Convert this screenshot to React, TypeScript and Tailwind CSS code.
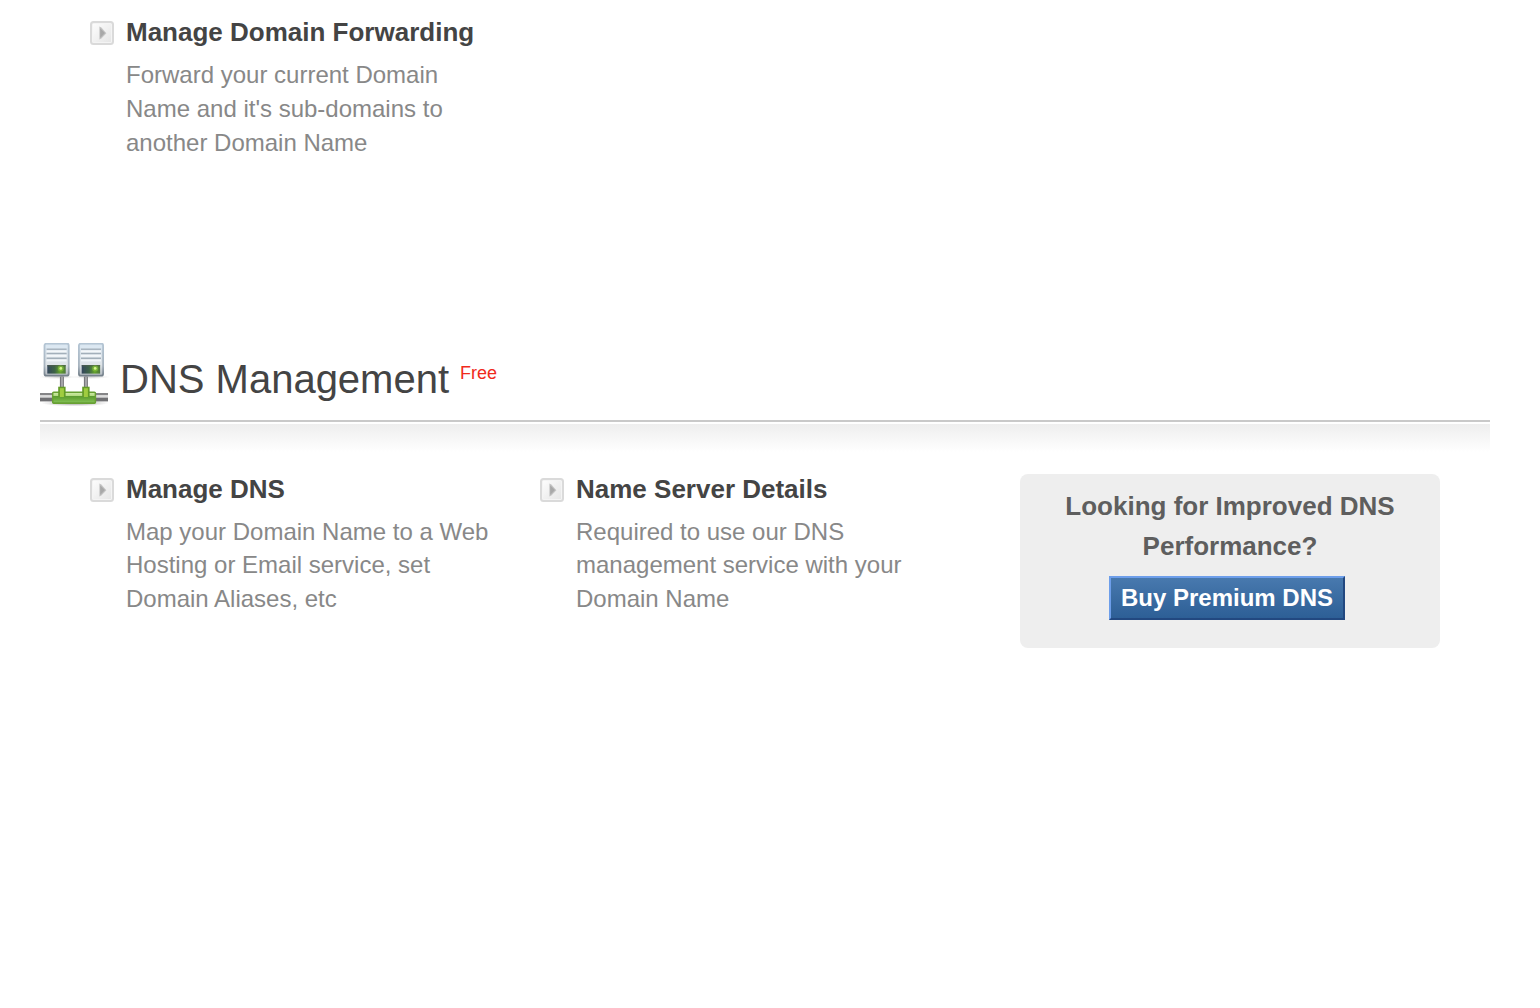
import type { ReactNode } from "react";

function ArrowBox() {
  return (
    <svg width="24" height="26" viewBox="0 0 24 26" className="shrink-0">
      <defs>
        <linearGradient id="box" x1="0" y1="0" x2="1" y2="1">
          <stop offset="0" stopColor="#fcfcfc" />
          <stop offset="1" stopColor="#e6e6e6" />
        </linearGradient>
      </defs>
      <rect x="1" y="1.9" width="22" height="22.2" rx="2.5" fill="#f4f4f4" stroke="#dadada" strokeWidth="2" />
      <rect x="3" y="4" width="18" height="18" fill="url(#box)" />
      <path d="M9.4 6.600v12.800l2-.8 5-5.400-5-5.600z" fill="#c4c4c4" />
      <path d="M10.200 8.2v9.800l4.800-4.900z" fill="#a8a8a8" />
    </svg>
  );
}

function Server({ x }: { x: number }) {
  return (
    <g transform={`translate(${x} 0)`}>
      <rect x="0.9" y="1.5" width="24.2" height="32.2" rx="2" fill="url(#body)" stroke="url(#edge)" strokeWidth="1.8" />
      <rect x="2.3" y="3.2" width="21.4" height="3" fill="#dce8f2" />
      <rect x="3" y="6.5" width="20" height="1.6" fill="#a9b5c0" />
      <rect x="3" y="8.3" width="20" height="2.2" fill="#f4f7fa" />
      <rect x="3" y="10.8" width="20" height="1.6" fill="#a3afba" />
      <rect x="3" y="12.6" width="20" height="2.2" fill="#f4f7fa" />
      <rect x="3" y="15.6" width="20" height="1.6" fill="#a3afba" />
      <rect x="3" y="17.4" width="20" height="2" fill="#f2f6f9" />
      <rect x="3.7" y="23" width="18.4" height="8.6" fill="url(#screen)" />
      <rect x="3.7" y="23" width="18.4" height="1.4" fill="#50604e" opacity="0.6" />
      <circle cx="17.2" cy="26.4" r="3" fill="#8acb3c" opacity="0.55" />
      <circle cx="17.2" cy="26.4" r="1.4" fill="#d5f58d" />
    </g>
  );
}

function Connector({ x }: { x: number }) {
  return (
    <g transform={`translate(${x} 0)`}>
      <rect x="-2" y="34.5" width="4" height="11" fill="#77777b" />
      <rect x="-0.7" y="35" width="1.6" height="10" fill="#b0b0b3" />
      <path d="M-3.7 54.5v-9.8h7.4v9.800z" fill="#639b28" />
      <path d="M-2 55v-8.800h4V55z" fill="#a0cc40" />
    </g>
  );
}

function ServersIcon() {
  return (
    <svg width="72" height="68" viewBox="0 0 72 68" className="shrink-0">
      <defs>
        <filter id="soft" x="0" y="0" width="1" height="1">
          <feGaussianBlur stdDeviation="0.6" />
        </filter>
        <linearGradient id="body" x1="0" y1="0" x2="0" y2="1">
          <stop offset="0" stopColor="#d6e3ee" />
          <stop offset="0.65" stopColor="#dfe4e8" />
          <stop offset="1" stopColor="#b3bac0" />
        </linearGradient>
        <linearGradient id="edge" x1="0" y1="0" x2="0" y2="1">
          <stop offset="0" stopColor="#b4c5d4" />
          <stop offset="0.7" stopColor="#a7b3be" />
          <stop offset="1" stopColor="#75818b" />
        </linearGradient>
        <linearGradient id="screen" x1="0" y1="0" x2="1" y2="0">
          <stop offset="0" stopColor="#35475d" />
          <stop offset="0.4" stopColor="#3d6346" />
          <stop offset="0.7" stopColor="#64a22c" />
          <stop offset="1" stopColor="#4d763a" />
        </linearGradient>
        <linearGradient id="green" x1="0" y1="0" x2="0" y2="1">
          <stop offset="0" stopColor="#d3ecae" />
          <stop offset="0.3" stopColor="#b4dc82" />
          <stop offset="0.36" stopColor="#5c9b30" />
          <stop offset="0.55" stopColor="#67a637" />
          <stop offset="0.85" stopColor="#7dbb50" />
          <stop offset="1" stopColor="#69a43c" />
        </linearGradient>
        <radialGradient id="shade">
          <stop offset="0" stopColor="#555" stopOpacity="0.65" />
          <stop offset="1" stopColor="#777" stopOpacity="0" />
        </radialGradient>
      </defs>
      <g filter="url(#soft)">
        <ellipse cx="35" cy="61" rx="34" ry="3.4" fill="url(#shade)" />
        <ellipse cx="18" cy="35" rx="19" ry="2" fill="url(#shade)" opacity="0.4" />
        <ellipse cx="51" cy="35" rx="19" ry="2" fill="url(#shade)" opacity="0.4" />
        <rect x="-2" y="51" width="70" height="2.4" fill="#858587" />
        <rect x="-2" y="53.4" width="70" height="2.2" fill="#dcdcdc" />
        <rect x="-2" y="55.6" width="70" height="3.8" fill="#707073" />
        <Server x={3.6} />
        <Server x={38} />
        <rect x="12.7" y="50.3" width="42.7" height="11" rx="1" fill="url(#green)" stroke="#67a032" strokeWidth="1.5" />
        <Connector x={21.9} />
        <Connector x={45.9} />
      </g>
    </svg>
  );
}

function Feature({
  title,
  leading = "leading-[33.6px]",
  children,
}: {
  title: string;
  leading?: string;
  children: ReactNode;
}) {
  return (
    <div className="flex w-[450px] gap-3">
      <div className="pt-1">
        <ArrowBox />
      </div>
      <div>
        <h3 className="text-[26px] leading-8 font-bold text-[#444]">{title}</h3>
        <p className={`mt-[9.6px] text-2xl whitespace-nowrap text-[#888] ${leading}`}>{children}</p>
      </div>
    </div>
  );
}

export default function App() {
  return (
    <main className="h-[1008px] w-[1540px] overflow-hidden bg-white pt-4 pr-[50px] pl-10 font-['Liberation_Sans',Arial,sans-serif]">
      <section className="h-[326px] pl-[50px]">
        <Feature title="Manage Domain Forwarding" leading="leading-[34px]">
          Forward your current Domain
          <br />
          Name and it's sub-domains to
          <br />
          another Domain Name
        </Feature>
      </section>

      <section>
        <header className="flex h-[78px]">
          <ServersIcon />
          <h2 className="ml-2 flex gap-[11px] text-[40px] leading-[74px] text-[#444]">
            DNS Management
            <span className="text-lg leading-[62px] text-[#f02a1c]">Free</span>
          </h2>
        </header>
        <div className="border-t-2 border-[#c9c9c9] pt-0.5">
          <div className="flex h-[224px] bg-linear-to-b from-[#eeeeee] to-white to-[28px] pt-[49px] pl-[50px]">
            <Feature title="Manage DNS">
              Map your Domain Name to a Web
              <br />
              Hosting or Email service, set
              <br />
              Domain Aliases, etc
            </Feature>
            <Feature title="Name Server Details">
              Required to use our DNS
              <br />
              management service with your
              <br />
              Domain Name
            </Feature>
            <aside className="mt-px ml-[30px] flex h-[174px] w-[420px] flex-col items-center rounded-lg bg-[#eee] pt-3 text-center">
              <p className="text-[26px] leading-10 font-bold text-[#5e5e5e]">
                Looking for Improved DNS
                <br />
                Performance?
              </p>
              <button className="mt-2.5 mr-1.5 h-11 w-[236px] border-2 border-t-[#6d9eea] border-r-[#224880] border-b-[#224880] border-l-[#6d9eea] bg-linear-to-b from-[#4879ae] to-[#2d5f96] text-2xl leading-10 font-bold text-white">
                Buy Premium DNS
              </button>
            </aside>
          </div>
        </div>
      </section>
    </main>
  );
}
